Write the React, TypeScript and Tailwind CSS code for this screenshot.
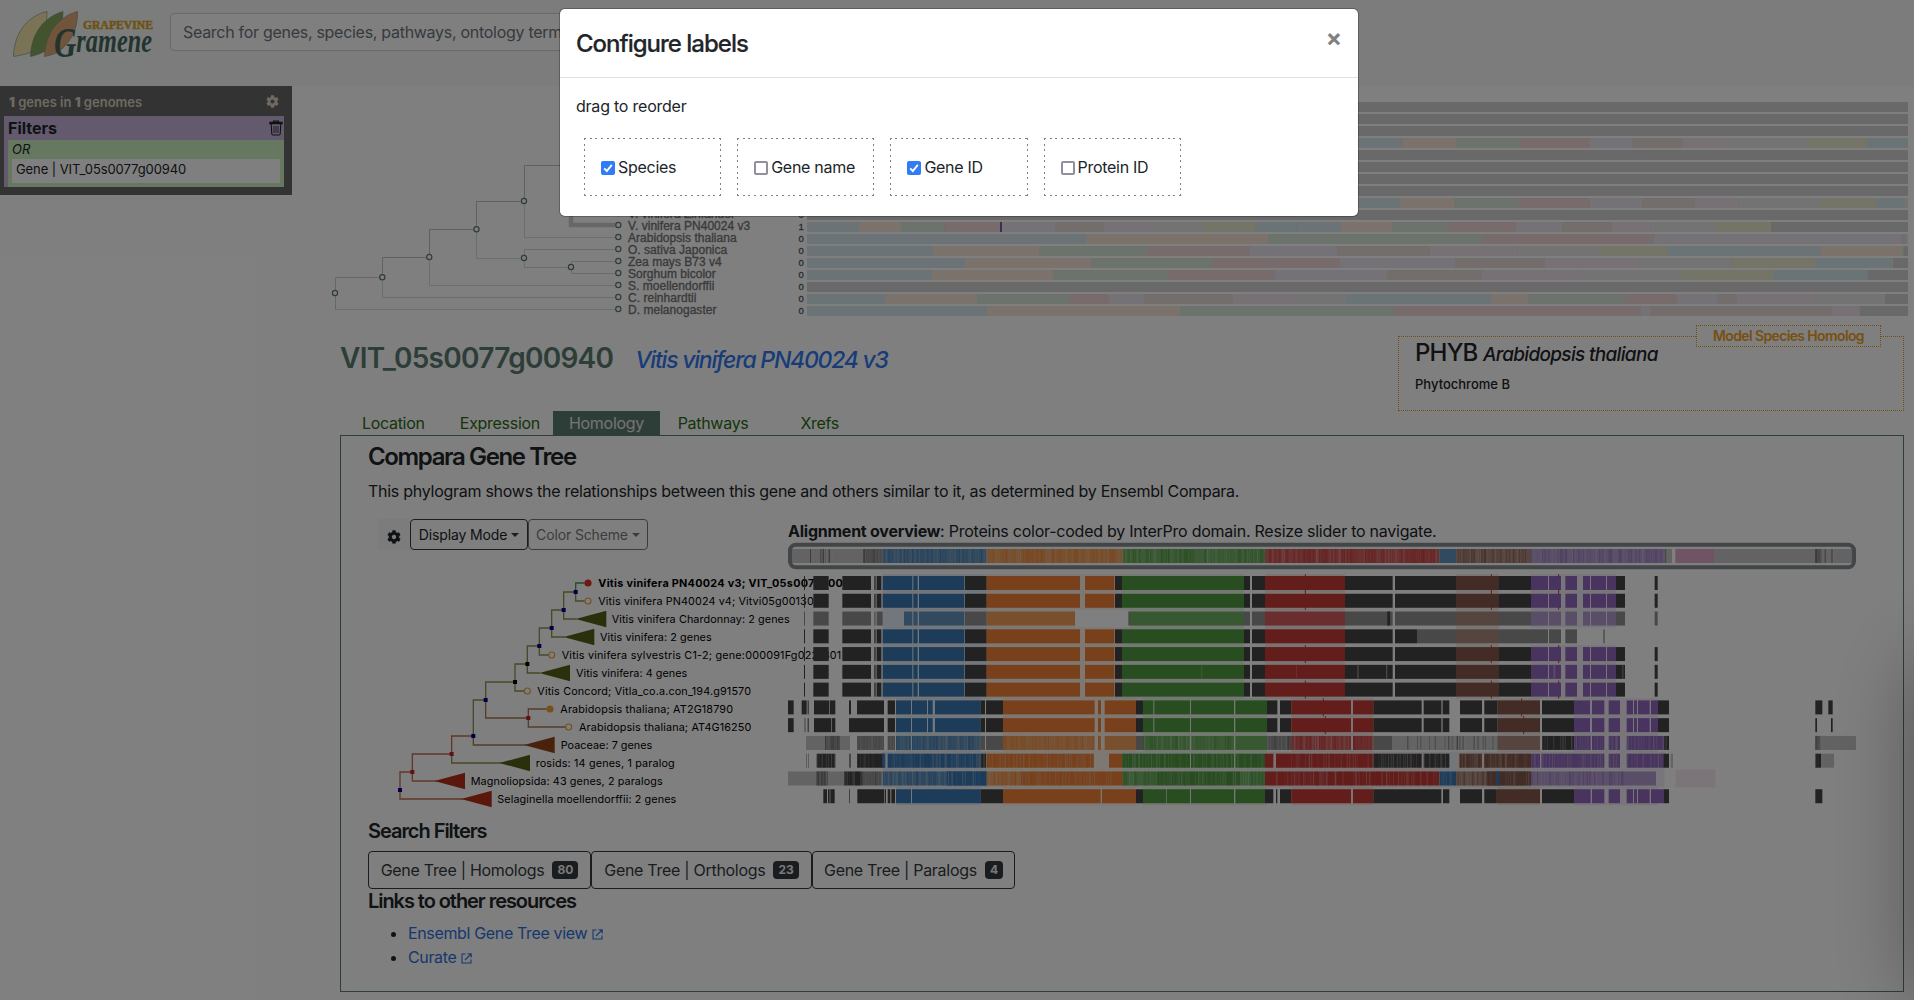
import React from 'react';
import { FaCog } from 'react-icons/fa';

const INTER = 'font-[Inter,"Liberation_Sans",sans-serif]';

/* ---------- genome distribution rows ---------- */
const PALE = ['#d9e6ee', '#f6e4d8', '#d9e7d8', '#eed8d7', '#e8e2ee', '#e6dcd9', '#efe0ea', '#e6e6e6', '#eaeace', '#d4e8ec'];
const DARK = '#d2d2d2';
type Genome = { edges: number[] };
const E: Genome = { edges: [] };
const genomes: Genome[] = [
  E, E, E,
  { edges: [1402.6, 1456, 1520, 1590, 1632.5, 1683, 1724, 1806, 1867, 1908] },
  E, E, E, E,
  { edges: [1400, 1454, 1519, 1590, 1642, 1695, 1738.6, 1820, 1876, 1905, 1905, 1908] },
  E,
  { edges: [859, 901, 944.6, 1000, 1055.7, 1104, 1152, 1203, 1255, 1296.4, 1341, 1392, 1447, 1516, 1562, 1612, 1650.4, 1717, 1771] },
  { edges: [1086, 1268, 1483, 1653.7, 1901.5, 1906, 1908] },
  { edges: [933, 1039, 1146, 1250, 1337.5, 1429.7, 1517.5, 1600, 1668, 1736, 1820.6, 1902, 1904] },
  { edges: [965, 1091, 1212, 1340, 1455, 1545, 1638, 1731.6, 1815, 1892, 1892, 1893] },
  { edges: [932, 1053, 1168, 1275, 1387, 1482, 1582.7, 1681, 1773, 1868] },
  E,
  { edges: [886, 977, 1069, 1109, 1144, 1233, 1297, 1347, 1347, 1425.6, 1491, 1528.5, 1625, 1677, 1717.7, 1737, 1814, 1885] },
  { edges: [987, 1180, 1394.5, 1641, 1650, 1832, 1860] },
];
const species: [string, number][] = [
  ['V. vinifera Zinfandel', 213], ['V. vinifera PN40024 v3', 225], ['Arabidopsis thaliana', 237], ['O. sativa Japonica', 249],
  ['Zea mays B73 v4', 261], ['Sorghum bicolor', 273], ['S. moellendorffii', 285], ['C. reinhardtii', 297], ['D. melanogaster', 309],
];

function GenomeTree() {
  const nodes: [number, number][] = [[335, 293], [382.3, 277.3], [429.3, 257], [476.5, 229.3], [524, 201], [524, 258], [571, 267]];
  return (
    <svg className="block" width="1594" height="239" viewBox="320 86 1594 239">
      <g fill="none" stroke="#dadada" strokeWidth="1">
        <path d="M335.5 309V277.5H382" stroke="#cecece" />
        <path d="M335 309.5H615M382.5 277V297.500H615M429.500 257V285.500H615M476.500 229V258.500H524M524 237.500H615M524.500 200V237.500" />
        <path d="M382.500 278V257.500H429.500V229.500H476.500V201.500H524.500V165.500H575" stroke="#c0c0c0" />
        <path d="M524.500 258V249.500H615M524.500 258V267.500H571M571.500 267V261.500H615M571.500 267V273.500H615" stroke="#d6d6d6" />
        <path d="M571 200V225H615" stroke="#cecece" strokeWidth="4.500" />
      </g>
      <g fill="#fff" stroke="#5b7b73" strokeWidth="1.2">
        {nodes.map(([x, y]) => <circle key={`${x}-${y}`} cx={x} cy={y} r="2.6" />)}
        {species.map(([n, y]) => <circle key={n} cx="618.3" cy={y} r="2.6" />)}
      </g>
      <g className={'font-["Liberation_Sans",sans-serif]'} fontSize="12" letterSpacing="0.03" fill="#767676" stroke="#767676" strokeWidth="0.35">
        {species.map(([n, y]) => <text key={n} x="628" y={y + 4.6}>{n}</text>)}
      </g>
      <g className={'font-["Liberation_Sans",sans-serif]'} fontSize="9.5" fill="#555" stroke="#555" strokeWidth="0.3">
        {species.map(([n, y]) => <text key={n} x="798.6" y={y + 5}>{n.includes('PN40024') ? '1' : '0'}</text>)}
      </g>
      {genomes.map((g, i) => {
        const y = 102 + i * 12;
        let x = 807;
        return (
          <g key={i}>
            <rect x={807} y={y} width={1101} height={10} fill={DARK} />
            {g.edges.map((e, k) => {
              const r = <rect key={k} x={x} y={y} width={e - x} height={10} fill={PALE[k % 10]} />;
              x = e;
              return r;
            })}
          </g>
        );
      })}
      <rect x="1000" y="222" width="2" height="10" fill="#7a58a8" />
    </svg>
  );
}

/* ---------- gene tree and alignments ---------- */
const labels: [number, number, string][] = [
  [598.3, 267, 'Vitis vinifera PN40024 v3; VIT_05s0077g00940'],
  [598.3, 215.4, 'Vitis vinifera PN40024 v4; Vitvi05g00130'],
  [611.7, 178, 'Vitis vinifera Chardonnay: 2 genes'],
  [600, 111.7, 'Vitis vinifera: 2 genes'],
  [561.7, 279.5, 'Vitis vinifera sylvestris C1-2; gene:000091Fg0221301'],
  [576, 111.3, 'Vitis vinifera: 4 genes'],
  [537.3, 213.7, 'Vitis Concord; Vitla_co.a.con_194.g91570'],
  [560.3, 172.7, 'Arabidopsis thaliana; AT2G18790'],
  [579, 172.3, 'Arabidopsis thaliana; AT4G16250'],
  [560.7, 91.6, 'Poaceae: 7 genes'],
  [535.7, 139, 'rosids: 14 genes, 1 paralog'],
  [470.7, 192, 'Magnoliopsida: 43 genes, 2 paralogs'],
  [497.3, 179, 'Selaginella moellendorffii: 2 genes'],
];

/* Segment codes: k black, g mid gray, l light gray, b blue, o orange, n green, r red, w brown, p purple, i pink.
   Upper case marks the half-strength variant used for collapsed clades; "~" adds conservation stripes. */
const COLORS: Record<string, string> = {
  k: '#444444', g: '#909090', l: '#c6c6c6', b: '#3a78b4', o: '#f08236', n: '#509a40', r: '#c63a36', w: '#86584c', p: '#9069bc', i: '#e0a8cc',
  B: '#6494be', O: '#f2a05c', N: '#70b062', R: '#d25c5a', W: '#ac887c', P: '#b29ad0',
};
type Seg = [string, number, number];
const parse = (s: string): Seg[] =>
  s.split(' ').map((t) => {
    const m = /^([a-zA-Z]~?)(\d+)-(\d+)$/.exec(t)!;
    return [m[1], Number(m[2]), Number(m[3])];
  });

const head = 'k72-75 k100-146 k187-273 k282-284 g285-290 k291-304 b308-397 b400-413 b417-553 k555-620 o620-900 o915-1003 k1005-1026 n1026-1392';
const mid = 'k1392-1410 k1416-1455 r1455-1695 k1695-1838 k1845-2028 w2028-2157 k2157-2253';
const tail = 'p2253-2304 p2307-2343 p2356-2391 p2409-2430 p2433-2478 p2481-2508 k2508-2535 k2624-2633';
const full = `${head} ${mid} ${tail}`;
const athMid = 'b348-393 b396-441 b444-458 b465-602 k602-615 k618-669 o669-944 o954-963 o974-1068 k1068-1089 n1089-1120 n1123-1230 n1233-1362 n1366-1461 k1461-1492 k1500-1534 r1534-1713 r1719-1780 k1780-1925 k1931-1984 g1985-1988 k1989-2008 k2040-2106 k2113-2152 w2152-2280 k2286-2382 p2382-2430 p2436-2473 p2486-2520 p2540-2559 p2562-2571 p2574-2609 p2613-2634 k2634-2667';
const rows: string[] = [
  full,
  full,
  'g72-75 g100-146 g187-273 g282-284 l285-290 g291-308 B372-397 B400-413 B417-553 g555-620 O620-885 g1045-1050 N1050-1392 g1392-1410 g1416-1455 R1455-1695 g1695-1838 k1822-1830 g1845-2028 W2028-2157 g2157-2253 P2253-2304 P2307-2343 P2356-2391 P2409-2430 P2433-2478 P2481-2508 g2508-2535 g2624-2633',
  `${head} k1392-1410 k1416-1455 r1455-1695 k1695-1838 k1845-1911 g1911-2028 W2028-2157 g2157-2304 g2307-2343 g2356-2391 g2470-2474`,
  full,
  `${full} N1263-1267 R1548-1551 g1732-1736 g1818-1822 P2320-2326 g2527-2530`,
  full,
  `k24-41 k65-80 k83-86 k102-148 k150-166 k207-213 k231-312 k323-345 ${athMid} k3106-3127 k3145-3158`,
  `k24-41 k74-76 k83-86 k102-153 k155-166 k207-312 k323-345 ${athMid} k3106-3111 k3153-3158`,
  'l78-210 g~135-180 g~231-312 g~323-345 B~348-393 B~396-602 g602-615 g618-669 O~669-944 O~954-963 O974-1068 g1068-1089 N~1089-1230 N~1233-1362 N1366-1461 g~1461-1534 R~1534-1713 R~1719-1780 g1780-1836 l~1836-2152 W2152-2280 k~2286-2382 p~2382-2432 p~2436-2473 p~2486-2520 p~2540-2652 k~2652-2667 g~3106-3122 l3122-3228',
  'g78-80 g84-86 k~110-166 g207-213 k~231-312 b~308-316 b~323-602 k~602-618 o~620-942 o987-1026 n~1026-1230 n~1233-1362 n~1366-1455 r1455-1480 r~1488-1780 k~1780-1925 k~1931-2008 w~2038-2106 w~2113-2253 p~2253-2280 p~2284-2473 p~2486-2520 p~2540-2650 k2650-2667 l2672-2679 k~3106-3123 l3123-3162',
  'l24-192 g~110-144 k~192-248 g~250-305 B~308-620 b~500-620 O~620-720 o~720-1028 N~1028-1130 n~1130-1380 N~1380-1455 r1455-1490 r~1490-1978 b~1978-2028 W~2028-2250 w~2120-2253 b2148-2158 P~2253-2535 P2535-2628',
  'k130-141 k144-149 k151-164 k208-210 k232-312 k314-318 k323-331 k334-345 b348-393 b396-602 k602-669 o669-962 o966-1068 k1068-1089 n1089-1158 n1160-1230 n1233-1362 n1366-1455 k1455-1480 k1488-1492 k1500-1534 r1534-1713 r1719-1780 k1780-1984 k1989-2008 k2040-2106 k2113-2148 w2148-2280 k2286-2382 p2382-2432 p2436-2473 p2486-2520 p2540-2559 p2562-2571 p2574-2609 p2613-2652 k2652-2667 k3106-3127',
];
const overview = 'l36-308 l~90-165 g~250-308 B~308-620 O~620-1028 N~1028-1455 R~1455-1978 B1978-2028 W~2028-2253 P~2253-2654 g2654-2660 l2660-2676 i2686-2802 l2802-3106 g~3106-3124 l~3124-3160 l3160-3216';

const tintA = 'b308-620 o620-1026 n1026-1392 r1455-1695 w2028-2157 p2253-2508';
const tintB = 'b348-602 o669-1068 n1089-1461 r1534-1780 w2152-2280 p2382-2634';
const tintC = 'b308-620 o620-1028 n1028-1455 r1455-1978 b1978-2028 w2028-2253 p2253-2654';
const tints = [
  tintA, tintA, 'b308-620 o620-885 n1050-1392 r1455-1695 w2028-2157 p2253-2508', 'b308-620 o620-1026 n1026-1392 r1455-1695 w2028-2157',
  tintA, tintA, tintA, tintB, tintB, tintB, tintC, `${tintC} i2686-2806 i2686-2807`, tintB,
];

const px = (u: number) => 780 + u / 3;

function Segments({ data, y, seed }: { data: string; y: number; seed: number }) {
  const out: React.ReactNode[] = [];
  let s = seed * 7919 + 13;
  const rnd = () => {
    s = (s * 1103515245 + 12345) % 2147483648;
    return s / 2147483648;
  };
  parse(data).forEach(([code, a, b], i) => {
    const half = code[0] === code[0].toUpperCase();
    const strong = half ? COLORS[code[0].toLowerCase()] : code[0] === 'l' || code[0] === 'g' ? '#505050' : COLORS[code[0]];
    out.push(<rect key={`s${i}`} x={px(a)} y={y} width={(b - a) / 3} height={14} fill={COLORS[code[0]]} />);
    if (code.length > 1) {
      for (let u = a; u < b - 2; u += 3 + Math.floor(rnd() * 8)) {
        const w = Math.min(2 + Math.floor(rnd() * 3), b - u);
        const light = rnd() < (half ? 0.45 : 0.7);
        out.push(
          <rect key={`t${i}-${u}`} x={px(u)} y={y} width={w / 3} height={14} fill={light ? '#d8d8d8' : strong} opacity={light ? 0.12 + rnd() * 0.3 : 0.25 + rnd() * 0.5} />,
        );
      }
    }
  });
  return <>{out}</>;
}

const OLIVE = '#8e9350';
const RUST = '#c46c50';
const BROWN = '#a87850';
const edges: [string, string][] = [
  ['M587 96V69H614', '#4a9a50'], ['M587 96V123H614', OLIVE], ['M551 150V96H587', OLIVE], ['M551 150V177H590', OLIVE],
  ['M515 204V150H551', OLIVE], ['M515 204V231H555', OLIVE], ['M478 258V204H515', OLIVE], ['M478 258V285H505', OLIVE],
  ['M442 312V258H478', OLIVE], ['M442 312V339H480', OLIVE], ['M405 366V312H442', OLIVE], ['M405 366V393H432', OLIVE],
  ['M317 420V366H405', OLIVE], ['M317 420V474H445', BROWN], ['M445 474V447H500', BROWN], ['M445 474V501H556', BROWN],
  ['M280 528V420H317', OLIVE], ['M280 528V555H440', BROWN], ['M215 582V528H280', RUST], ['M215 582V609H365', OLIVE],
  ['M97 636V582H215', RUST], ['M97 636V663H170', RUST], ['M60 690V636H97', RUST], ['M60 690V717H250', RUST],
];
const squares: [number, number, string][] = [
  [587, 96, '#000090'], [551, 150, '#000090'], [515, 204, '#000090'], [478, 258, '#000090'], [442, 312, '#000'], [405, 366, '#000'],
  [317, 420, '#000090'], [445, 474, '#c42020'], [280, 528, '#000090'], [215, 582, '#c42020'], [97, 636, '#c42020'], [60, 690, '#000090'],
];
const triangles: [number, number, string][] = [
  [587, 177, '#566018'], [551, 231, '#566018'], [478, 339, '#566018'], [432, 555, '#944418'],
  [358, 609, '#566018'], [163, 663, '#b43018'], [243, 717, '#b43018'],
];
const circles: [number, number, string, string][] = [
  [624, 69, '#e03028', '#e03028'], [624, 123, 'none', '#eaa23c'], [515, 285, 'none', '#eaa23c'], [442, 393, 'none', '#eaa23c'],
  [510, 447, '#eaa23c', '#eaa23c'], [566, 501, 'none', '#eaa23c'],
];

function GeneTree() {
  return (
    <svg className="block" width="1484" height="270" viewBox="380 542 1484 270">
      <g transform="translate(380 560) scale(0.33333)">
        <g fill="none" strokeWidth="4">
          {edges.map(([d, c]) => <path key={d} d={d} stroke={c} />)}
        </g>
        {triangles.map(([x, y, c]) => <path key={`${x}-${y}`} d={`M${x} ${y}L${x + 92} ${y - 25}V${y + 25}Z`} fill={c} />)}
        {squares.map(([x, y, c]) => <rect key={`${x}-${y}`} x={x - 6} y={y - 6} width="12" height="12" fill={c} />)}
        {circles.map(([x, y, f, c]) => <circle key={`${x}-${y}`} cx={x} cy={y} r="9" fill={f} stroke={c} strokeWidth="3.5" />)}
      </g>
      <g className={INTER} fontSize="10.8" fill="#000">
        {labels.map(([x, w, t], i) => (
          <text key={i} x={x} y={587 + i * 18} textLength={w} fontWeight={i === 0 ? 700 : 400}>{t}</text>
        ))}
      </g>
      <Segments data={overview} y={549} seed={99} />
      <rect x="790" y="544.7" width="1064" height="22.6" rx="6" fill="none" stroke="#858d90" strokeWidth="4" />
      {rows.map((r, i) => {
        const y = 576 + i * 17.77;
        return (
          <g key={i}>
            {parse(tints[i]).map(([c, a, b]) => (
              <rect key={b} x={px(a)} y={y - 2} width={(b - a) / 3} height={18} fill={COLORS[c]} opacity={0.12} />
            ))}
            <Segments data={r} y={y} seed={i + 1} />
            {[0, 1, 4, 6].includes(i) && [1576, 2134, 2336].map((u) => (
              <path key={u} d={`M${px(u)} ${y - 2}v3M${px(u)} ${y + 13}v3`} stroke="#c63a36" />
            ))}
            {[7, 8].includes(i) && [1630, 2225].map((u) => (
              <path key={u} d={`M${px(u + (i - 7) * 6)} ${y - 2}v3M${px(u + (i - 7) * 6)} ${y + 13}v3`} stroke="#c63a36" />
            ))}
          </g>
        );
      })}
    </svg>
  );
}

function Logo() {
  return (
    <svg className="block overflow-visible" width="142" height="73" viewBox="12 0 142 73">
      <rect x="12" width="142" height="73" fill="#f5faf9" />
      <g stroke="#8a8a80" strokeWidth="0.6">
        <path d="M47 11.500C30 15 14 31 13.500 56.500C22 55 29 54 34 50C42 42 47 30 47 11.500Z" fill="#f4e6aa" />
        <path d="M63 11.500C46 16 31 32 30.500 56.500C37 55 43 53 48 49C57 40 63 28 63 11.500Z" fill="#82a85c" />
        <path d="M77.500 11.500C60 16 45 32 44.500 56.500C52 55 58 53 63 48C72 39 78 28 77.500 11.500Z" fill="#e0a878" />
      </g>
      <text x="83" y="28.500" textLength="70" lengthAdjust="spacingAndGlyphs" fontSize="12.500" className={'font-["Liberation_Serif",serif]'} fontWeight="700" fill="#dfa226" stroke="#dfa226" strokeWidth="0.5">GRAPEVINE</text>
      <text x="54" y="57" textLength="98" lengthAdjust="spacingAndGlyphs" fontSize="33" className={'font-["Liberation_Serif",serif]'} fontStyle="italic" fontWeight="700" fill="#46685f">
        <tspan fontSize="42">G</tspan><tspan dy="-5">ramene</tspan>
      </text>
    </svg>
  );
}

function ExternalIcon() {
  return (
    <svg className="ml-[5px] mt-2 block" width="11" height="11" viewBox="0 0 11 11" fill="none" stroke="currentColor" strokeWidth="1.1">
      <path d="M4.500 1H1V10H10V6.500M6.500 0.800H10.200V4.500M10 1L4 7" />
    </svg>
  );
}

function Trash() {
  return (
    <svg className="block" width="14" height="16" viewBox="0 0 14 16" fill="none" stroke="#222" strokeWidth="1.100">
      <path d="M0.800 3.600V2.400H13.200V3.600ZM4.500 2.200V1H9.500V2.200M2.200 4L2.800 14Q2.900 15 3.800 15H10.200Q11.100 15 11.200 14L11.800 4" />
      <path d="M5 6V13M7 6V13M9 6V13" strokeWidth="0.800" />
    </svg>
  );
}

const tabs = ['Location', 'Expression', 'Homology', 'Pathways', 'Xrefs'];

function CheckItem({ label, on }: { label: string; on: boolean }) {
  return (
    <div className="mr-4 flex h-[58px] w-[137.200px] items-center pl-[17px] [background:repeating-linear-gradient(90deg,#808080_0_2px,transparent_2px_5.63px)_top/100%_1px_no-repeat,repeating-linear-gradient(90deg,#808080_0_2px,transparent_2px_5.63px)_bottom/100%_1px_no-repeat,repeating-linear-gradient(180deg,#808080_0_2px,transparent_2px_5.600px)_left/1px_100%_no-repeat,repeating-linear-gradient(180deg,#808080_0_2px,transparent_2px_5.600px)_right/1px_100%_no-repeat]">
      {on ? (
        <svg className="mt-px" width="14" height="14" viewBox="0 0 14 14">
          <rect width="14" height="14" rx="2" fill="#2f7cf6" />
          <path d="M3.200 7.300L5.800 10L10.800 3.800" fill="none" stroke="#fff" strokeWidth="1.900" />
        </svg>
      ) : (
        <span className="mt-px h-3.5 w-3.5 rounded-[2px] border-2 border-[#8f8f9d] bg-white" />
      )}
      <span className="ml-[3px] text-[16px] tracking-[-0.018em]">{label}</span>
    </div>
  );
}

export default function App() {
  return (
    <div className={'relative h-[1000px] w-[1914px] overflow-hidden bg-white font-[Inter,"Liberation_Sans",sans-serif] text-[16px] leading-6 text-[#212529]'}>
      <header className="flex h-[86px] bg-[#f8f9fa]">
        <div className="pl-3"><Logo /></div>
        <div className="ml-4 mt-[13px] flex h-[38px] w-[900px] items-center rounded border border-[#ced4da] bg-white pl-3 tracking-[-0.018em] text-[#6c757d]">
          Search for genes, species, pathways, ontology terms
        </div>
      </header>

      <div className="flex">
        <aside className="h-[109px] w-[292px] bg-[#666] pl-1">
          <div className="flex h-[30px] items-center justify-between pl-[5px] pr-[13px] pt-px text-[13px] font-semibold text-[#dcd4c0]">
            <span><b>1</b> genes in <b>1</b> genomes</span>
            <FaCog size={13} />
          </div>
          <div className="w-[280px] bg-[#c8b4dc]">
            <div className="flex h-6 items-center justify-between pl-1 pr-px">
              <span className="text-[16px] font-bold">Filters</span>
              <Trash />
            </div>
            <div className="ml-1 h-[47px] bg-[#cdf0be] px-1">
              <div className="h-[19px] text-[13px] italic leading-[19px]">OR</div>
              <div className="h-6 bg-white pl-1 text-[13px] leading-[21px] tracking-[-0.006em]">Gene | VIT_05s0077g00940</div>
            </div>
          </div>
        </aside>

        <main className="ml-7 w-[1594px]">
          <GenomeTree />
          <div className="ml-5 flex h-[86px] justify-between pr-[10px]">
            <h2 className="flex items-baseline pt-[15px] text-[28px] font-semibold leading-9 text-[#5a7b71]">
              <span className="tracking-[-0.026em]">VIT_05s0077g00940</span>
              <em className="ml-[22px] text-[23px] font-medium tracking-[-0.053em] text-[#3078f0]">Vitis vinifera PN40024 v3</em>
            </h2>
            <div className="relative mt-[11px] h-[75px] w-[506px] border border-dotted border-[#e89a20] pl-4">
              <div className="absolute right-[22px] top-[-12px] flex h-[22px] w-[185px] items-center justify-center border border-dotted border-[#e89a20] bg-white text-[14px] font-semibold tracking-[-0.045em] text-[#f0a020]">
                Model Species Homolog
              </div>
              <div className="h-8 text-[24px] font-medium leading-8 tracking-[-0.034em]">
                PHYB <em className="text-[19px] font-medium tracking-[-0.036em]">Arabidopsis thaliana</em>
              </div>
              <div className="mt-[5px] text-[13px] font-medium leading-5">Phytochrome B</div>
            </div>
          </div>

          <div className="ml-5 w-[1564px]">
            <nav className="flex h-6 tracking-[-0.018em] text-[#2b6a14]">
              {tabs.map((t) => (
                <div key={t} className={t === 'Homology' ? 'w-[106.600px] bg-[#5a7b71] text-center text-[#e8e8e8]' : 'w-[106.600px] text-center'}>{t}</div>
              ))}
            </nav>
            <section className="h-[557px] border border-[#5a7b71] pl-[27px]">
              <h4 className="h-8 pt-1.5 text-[24px] font-semibold leading-[30px] tracking-[-0.057em]">Compara Gene Tree</h4>
              <p className="mt-[11px] tracking-[-0.017em]">This phylogram shows the relationships between this gene and others similar to it, as determined by Ensembl Compara.</p>
              <div className="mt-4 flex h-[23px] text-[14px] tracking-[-0.010em]">
                <div className="ml-2.5 flex h-[31px] w-8 items-center justify-center bg-[#f8f9fa] pt-1"><FaCog size={14} /></div>
                <div className="flex h-[31px] w-[118px] items-center justify-center gap-1 rounded border border-[#343a40]">
                  Display Mode <i className="border-x-4 border-t-4 border-x-transparent border-t-[#343a40]" />
                </div>
                <div className="flex h-[31px] w-[120px] items-center justify-center gap-1 rounded border border-[#747a80] text-[#747a80]">
                  Color Scheme <i className="border-x-4 border-t-4 border-x-transparent border-t-[#747a80]" />
                </div>
                <div className="ml-[140px] text-[16px] tracking-[-0.015em]">
                  <b>Alignment overview</b>: Proteins color-coded by InterPro domain. Resize slider to navigate.
                </div>
              </div>
              <div className="ml-3"><GeneTree /></div>
              <h5 className="mt-[7px] h-8 text-[20px] font-semibold leading-6 tracking-[-0.052em]">Search Filters</h5>
              <div className="flex tracking-[-0.018em] text-[#343a40]">
                {([['Homologs', 80, 'w-[223px]'], ['Orthologs', 23, 'w-[221px]'], ['Paralogs', 4, 'w-[203px]']] as const).map(([n, c, w]) => (
                  <div key={n} className={`${w} flex h-[38px] items-center justify-center gap-2 rounded border border-[#343a40]`}>
                    <span>Gene Tree | {n}</span>
                    <span className="rounded bg-[#343a40] px-[5px] text-[12px] font-bold leading-[18px] tracking-normal text-[#f0f0f0]">{c}</span>
                  </div>
                ))}
              </div>
              <h5 className="h-8 text-[20px] font-semibold leading-6 tracking-[-0.053em]">Links to other resources</h5>
              <ul className="ml-10 list-disc tracking-[-0.022em] text-[#2f70dc]">
                <li className="marker:text-[#212529]"><span className="flex">Ensembl Gene Tree view <ExternalIcon /></span></li>
                <li className="marker:text-[#212529]"><span className="flex">Curate <ExternalIcon /></span></li>
              </ul>
            </section>
          </div>
        </main>
      </div>

      <div className="absolute left-[1925px] top-[665px] h-[330px] w-[200px] shadow-[0_0_90px_rgba(0,0,0,0.45)]" />

      <div className="absolute inset-0 bg-black/50">
        <div className="ml-[560px] mt-[9px] h-[207px] w-[798px] rounded-[5px] bg-white shadow-[0_0_0_1px_rgba(0,0,0,0.25)]">
          <div className="flex h-[69px] justify-between border-b border-[#dee2e6] px-4">
            <h4 className="pt-[17px] text-[24px] font-medium leading-9 tracking-[-0.042em] [-webkit-text-stroke:0.2px_#212529]">Configure labels</h4>
            <span className="pt-[13px] text-[24px] font-bold leading-8 text-[#808080]">×</span>
          </div>
          <div className="px-4 pt-4 tracking-[-0.014em]">drag to reorder</div>
          <div className="ml-6 mt-5 flex">
            <CheckItem label="Species" on />
            <CheckItem label="Gene name" on={false} />
            <CheckItem label="Gene ID" on />
            <CheckItem label="Protein ID" on={false} />
          </div>
        </div>
      </div>
    </div>
  );
}
